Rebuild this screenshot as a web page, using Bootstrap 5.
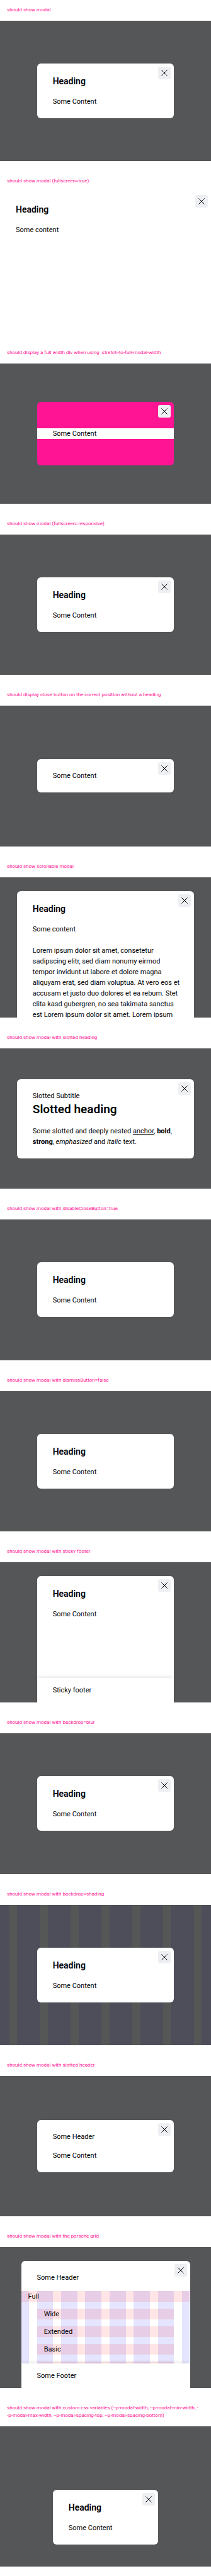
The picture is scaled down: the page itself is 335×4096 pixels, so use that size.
<!DOCTYPE html>
<html lang="en">
<head>
<meta charset="utf-8">
<meta name="viewport" content="width=device-width, initial-scale=1">
<title>Modal overview</title>
<link href="https://cdn.jsdelivr.net/npm/bootstrap@5.3.0/dist/css/bootstrap.min.css" rel="stylesheet">
<style>
  body { font: 11px/17px Roboto, "Liberation Sans", sans-serif; color: #010205; background: #fff; }
  .case-label { font-size: 8px; line-height: 12px; font-weight: 400; color: #ff1493; margin: 0; padding: 26px 11px 11px; }
  section:first-child .case-label { padding-top: 10px; }
  .stage { aspect-ratio: 3 / 2; background: #555658; overflow: hidden; }
  .stage-top { padding-top: 22px; }
  .stage-low { padding-bottom: 35px; }
  .stage-striped { background: repeating-linear-gradient(90deg, #4e4e5a 0 4.375%, #555756 4.375% 8.125%, #4e4e5a 8.125% 14.583%); }
  .dialog { width: 65%; border-radius: 6px; padding: 18px 25px; gap: 13px; background: #fff; }
  .dialog-wide { width: 84%; }
  .dialog-grid { width: 80%; }
  .dialog-small { width: 50%; }
  .dialog-full { width: 100%; border-radius: 0; }
  .dialog-pink { background: #ff1493; padding: 42px 0; }
  .band { background: #fff; padding: 0 25px; }
  .dialog-open { border-radius: 6px 6px 0 0; padding-bottom: 0; }
  .dialog h2 { font-size: 14px; line-height: 21px; font-weight: 600; margin: 0; }
  .dialog h2.title-big { font-size: 19px; line-height: 26px; }
  .dialog p { margin: 0; }
  .dialog a { color: inherit; }
  .close-x { top: 5px; right: 5px; width: 20px; height: 20px; border: 0; border-radius: 3px; background: #eeeff2; }
  .close-x svg { width: 10px; height: 10px; stroke: #010205; fill: none; }
  .sticky-foot { margin: 0 -25px; padding: 11px 25px; background: #fff; box-shadow: 0 -3px 6px -2px rgba(0,0,0,.12); z-index: 2; }
  .grid-body { margin: 0 -25px -13px; min-height: 0; overflow: hidden; }
  .tracks { grid-template-columns: 4.7% repeat(6, 1fr) 4.7%; grid-template-rows: repeat(6, 17px); gap: 11px 4.7%; }
  .track { grid-row: 1 / -1; background: rgba(0,0,255,.1); }
  .span-full, .span-inner { background: rgba(255,0,0,.1); padding-left: 11px; z-index: 1; }
  .span-full { grid-area: 1 / 1 / 2 / -1; }
  .span-inner { grid-column: 2 / 8; }
  .end-space { height: 15px; }
</style>
</head>
<body>
<svg class="d-none" aria-hidden="true"><symbol id="x" viewBox="0 0 10 10"><path d="M.4.4l9.2 9.2M9.6.4L.4 9.6"/></symbol></svg>
<main>
<section>
  <h1 class="case-label">should show modal</h1>
  <div class="stage d-flex align-items-center justify-content-center">
    <div class="dialog position-relative d-flex flex-column">
      <button type="button" class="close-x position-absolute p-0 d-flex align-items-center justify-content-center" aria-label="Close"><svg><use href="#x"/></svg></button>
      <h2>Heading</h2><p>Some Content</p>
    </div>
  </div>
</section>
<section>
  <h1 class="case-label">should show modal (fullscreen=true)</h1>
  <div class="stage bg-white d-flex">
    <div class="dialog dialog-full position-relative d-flex flex-column">
      <button type="button" class="close-x position-absolute p-0 d-flex align-items-center justify-content-center" aria-label="Close"><svg><use href="#x"/></svg></button>
      <h2>Heading</h2><p>Some content</p>
    </div>
  </div>
</section>
<section>
  <h1 class="case-label">should display a full width div when using .stretch-to-full-modal-width</h1>
  <div class="stage d-flex align-items-center justify-content-center">
    <div class="dialog dialog-pink position-relative d-flex flex-column">
      <button type="button" class="close-x position-absolute p-0 d-flex align-items-center justify-content-center" aria-label="Close"><svg><use href="#x"/></svg></button>
      <div class="band">Some Content</div>
    </div>
  </div>
</section>
<section>
  <h1 class="case-label">should show modal (fullscreen=responsive)</h1>
  <div class="stage d-flex align-items-center justify-content-center">
    <div class="dialog position-relative d-flex flex-column">
      <button type="button" class="close-x position-absolute p-0 d-flex align-items-center justify-content-center" aria-label="Close"><svg><use href="#x"/></svg></button>
      <h2>Heading</h2><p>Some Content</p>
    </div>
  </div>
</section>
<section>
  <h1 class="case-label">should display close button on the correct position without a heading</h1>
  <div class="stage d-flex align-items-center justify-content-center">
    <div class="dialog position-relative d-flex flex-column">
      <button type="button" class="close-x position-absolute p-0 d-flex align-items-center justify-content-center" aria-label="Close"><svg><use href="#x"/></svg></button>
      <p>Some Content</p>
    </div>
  </div>
</section>
<section>
  <h1 class="case-label">should show scrollable modal</h1>
  <div class="stage stage-top d-flex justify-content-center">
    <div class="dialog dialog-wide dialog-open position-relative d-flex flex-column">
      <button type="button" class="close-x position-absolute p-0 d-flex align-items-center justify-content-center" aria-label="Close"><svg><use href="#x"/></svg></button>
      <h2>Heading</h2>
      <p class="text-nowrap">Some content<br><br>Lorem ipsum dolor sit amet, consetetur<br>sadipscing elitr, sed diam nonumy eirmod<br>tempor invidunt ut labore et dolore magna<br>aliquyam erat, sed diam voluptua. At vero eos et<br>accusam et justo duo dolores et ea rebum. Stet<br>clita kasd gubergren, no sea takimata sanctus<br>est Lorem ipsum dolor sit amet. Lorem ipsum</p>
    </div>
  </div>
</section>
<section>
  <h1 class="case-label">should show modal with slotted heading</h1>
  <div class="stage d-flex align-items-center justify-content-center">
    <div class="dialog dialog-wide position-relative d-flex flex-column">
      <button type="button" class="close-x position-absolute p-0 d-flex align-items-center justify-content-center" aria-label="Close"><svg><use href="#x"/></svg></button>
      <div><p>Slotted Subtitle</p><h2 class="title-big">Slotted heading</h2></div>
      <p>Some slotted and deeply nested <a href="#">anchor</a>, <b>bold</b>,<br><strong>strong</strong>, <em>emphasized</em> and <i>italic</i> text.</p>
    </div>
  </div>
</section>
<section>
  <h1 class="case-label">should show modal with disableCloseButton=true</h1>
  <div class="stage d-flex align-items-center justify-content-center">
    <div class="dialog d-flex flex-column"><h2>Heading</h2><p>Some Content</p></div>
  </div>
</section>
<section>
  <h1 class="case-label">should show modal with dismissButton=false</h1>
  <div class="stage d-flex align-items-center justify-content-center">
    <div class="dialog d-flex flex-column"><h2>Heading</h2><p>Some Content</p></div>
  </div>
</section>
<section>
  <h1 class="case-label">should show modal with sticky footer</h1>
  <div class="stage stage-top d-flex justify-content-center">
    <div class="dialog dialog-open position-relative d-flex flex-column">
      <button type="button" class="close-x position-absolute p-0 d-flex align-items-center justify-content-center" aria-label="Close"><svg><use href="#x"/></svg></button>
      <h2>Heading</h2><p>Some Content</p>
      <footer class="sticky-foot mt-auto">Sticky footer</footer>
    </div>
  </div>
</section>
<section>
  <h1 class="case-label">should show modal with backdrop=blur</h1>
  <div class="stage d-flex align-items-center justify-content-center">
    <div class="dialog position-relative d-flex flex-column">
      <button type="button" class="close-x position-absolute p-0 d-flex align-items-center justify-content-center" aria-label="Close"><svg><use href="#x"/></svg></button>
      <h2>Heading</h2><p>Some Content</p>
    </div>
  </div>
</section>
<section>
  <h1 class="case-label">should show modal with backdrop=shading</h1>
  <div class="stage stage-striped d-flex align-items-center justify-content-center">
    <div class="dialog position-relative d-flex flex-column">
      <button type="button" class="close-x position-absolute p-0 d-flex align-items-center justify-content-center" aria-label="Close"><svg><use href="#x"/></svg></button>
      <h2>Heading</h2><p>Some Content</p>
    </div>
  </div>
</section>
<section>
  <h1 class="case-label">should show modal with slotted header</h1>
  <div class="stage d-flex align-items-center justify-content-center">
    <div class="dialog position-relative d-flex flex-column">
      <button type="button" class="close-x position-absolute p-0 d-flex align-items-center justify-content-center" aria-label="Close"><svg><use href="#x"/></svg></button>
      <header>Some Header</header><p>Some Content</p>
    </div>
  </div>
</section>
<section>
  <h1 class="case-label">should show modal with the porsche grid</h1>
  <div class="stage stage-top d-flex justify-content-center">
    <div class="dialog dialog-grid dialog-open position-relative d-flex flex-column">
      <button type="button" class="close-x position-absolute p-0 d-flex align-items-center justify-content-center" aria-label="Close"><svg><use href="#x"/></svg></button>
      <header>Some Header</header>
      <div class="grid-body flex-fill">
        <div class="tracks d-grid">
          <div class="track" style="grid-column:1"></div><div class="track" style="grid-column:2"></div><div class="track" style="grid-column:3"></div><div class="track" style="grid-column:4"></div><div class="track" style="grid-column:5"></div><div class="track" style="grid-column:6"></div><div class="track" style="grid-column:7"></div><div class="track" style="grid-column:8"></div>
          <div class="span-full">Full</div>
          <div class="span-inner" style="grid-row:2">Wide</div>
          <div class="span-inner" style="grid-row:3">Extended</div>
          <div class="span-inner" style="grid-row:4">Basic</div>
          <div class="span-inner" style="grid-row:5"></div>
        </div>
      </div>
      <footer class="sticky-foot mt-auto">Some Footer</footer>
    </div>
  </div>
</section>
<section>
  <h1 class="case-label">should show modal with custom css variables (--p-modal-width, --p-modal-min-width, -<br>-p-modal-max-width, --p-modal-spacing-top, --p-modal-spacing-bottom)</h1>
  <div class="stage stage-low d-flex align-items-end justify-content-center">
    <div class="dialog dialog-small position-relative d-flex flex-column">
      <button type="button" class="close-x position-absolute p-0 d-flex align-items-center justify-content-center" aria-label="Close"><svg><use href="#x"/></svg></button>
      <h2>Heading</h2><p>Some Content</p>
    </div>
  </div>
  <div class="end-space"></div>
</section>
</main>
<script src="https://cdn.jsdelivr.net/npm/bootstrap@5.3.0/dist/js/bootstrap.bundle.min.js"></script>
</body>
</html>
